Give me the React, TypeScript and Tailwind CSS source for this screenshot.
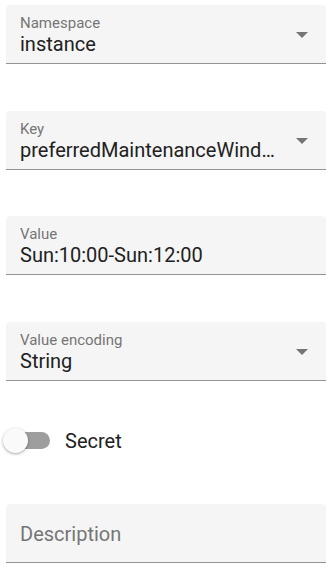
import React, { useState } from 'react';

interface FieldProps {
  label: string;
  value?: string;
  select?: boolean;
}

const ArrowDrop: React.FC = () => (
  <svg className="absolute right-[12px] top-[17px] w-[24px] h-[24px]" viewBox="0 0 24 24">
    <path d="M6 10l6 6 6-6z" fill="#757575" />
  </svg>
);

const FilledField: React.FC<FieldProps> = ({ label, value, select }) => {
  // empty field -> label sits in the middle like MUI
  if (!value) {
    return (
      <div className="relative h-[59px] bg-[#f5f5f5] rounded-t-[4px] border-b-[1.25px] border-[#949494] pl-[14px]">
        <div className="pt-[18px] text-[20px] leading-[24px] text-[#757575]">{label}</div>
      </div>
    );
  }
  return (
    <div className="relative h-[59px] bg-[#f5f5f5] rounded-t-[4px] border-b-[1.25px] border-[#949494] pl-[14px] pr-[44px]">
      <div className="pt-[9px] text-[15px] leading-[18px] text-[#757575]">{label}</div>
      <div className="mt-[0px] text-[20px] leading-[24px] text-[#212121] truncate">{value}</div>
      {select && <ArrowDrop />}
    </div>
  );
};

const App: React.FC = () => {
  const [secret, setSecret] = useState(false);

  return (
    <div className="px-[6px] pt-[5px] bg-white min-h-[572px]" style={{ fontFamily: 'Roboto, "Noto Sans", sans-serif' }}>
      <FilledField label="Namespace" value="instance" select />
      <div className="h-[47px]" />
      <FilledField label="Key" value="preferredMaintenanceWindow" select />
      <div className="h-[46px]" />
      <FilledField label="Value" value="Sun:10:00-Sun:12:00" />
      <div className="h-[47px]" />
      <FilledField label="Value encoding" value="String" select />

      <div className="mt-[46px] h-[28px] flex items-center -ml-[6px]">
        <button
          type="button"
          onClick={() => setSecret(s => !s)}
          className="relative w-[52px] h-[28px] shrink-0"
        >
          <span className="absolute left-[8px] top-[5px] w-[42px] h-[17px] rounded-full bg-[#9e9e9e]" />
          <span
            className={
              'absolute top-[1px] w-[25px] h-[25px] rounded-full shadow-[0_1px_3px_rgba(0,0,0,0.35)] ' +
              (secret ? 'left-[25px] bg-[#1976d2]' : 'left-[3px] bg-[#fafafa]')
            }
          />
        </button>
        <span className="ml-[13px] text-[20px] leading-[24px] text-[#212121]">Secret</span>
      </div>

      <div className="h-[49px]" />
      <FilledField label="Description" />
    </div>
  );
};

export default App;
